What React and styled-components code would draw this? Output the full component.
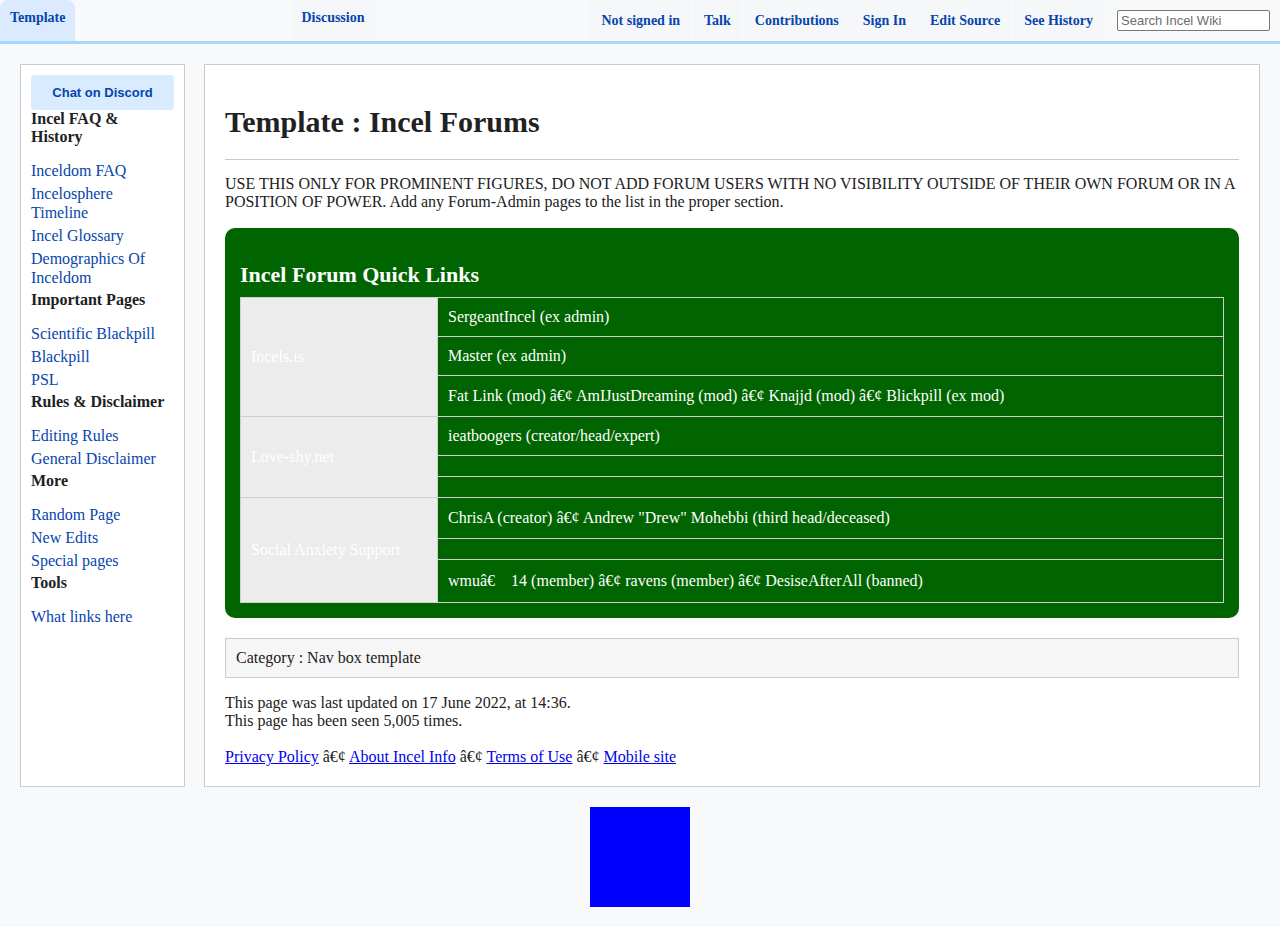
import React from "react";
import styled, { createGlobalStyle } from "styled-components";

const Global = createGlobalStyle`
  html, body { margin: 0; padding: 0; background: #f8f9fa; }
  body { font-family: "Liberation Serif", "Times New Roman", serif; color: #202122; }
  * { box-sizing: border-box; }
`;

const Header = styled.header`
  display: flex;
  justify-content: space-between;
  align-items: stretch;
  height: 44px;
  padding-right: 10px;
  border-bottom: 3px solid #a7d7f9;
  background: #f8f9fa;
`;

const Tab = styled.a`
  display: block;
  padding: 10px 10px 0;
  height: 41px;
  font: bold 14px/16px "Liberation Serif", serif;
  color: #0645ad;
  text-decoration: none;
  border-radius: 8px 8px 0 0;
  background: ${(p) => (p.$active ? "#dbeafe" : "#f6f7f9")};
`;

const NavGroup = styled.nav`
  display: flex;
  align-items: stretch;
  gap: 2px;
`;

const NavItem = styled.a`
  display: flex;
  align-items: center;
  padding: 0 11px;
  height: 41px;
  font: bold 14px/16px "Liberation Serif", serif;
  color: #0645ad;
  text-decoration: none;
  background: #f6f7f9;
`;

const Search = styled.input`
  align-self: flex-start;
  margin: 10px 0 0 11px;
  width: 153px;
  height: 21px;
  padding: 1px 3px;
  font: 13px "Liberation Sans", Arial, sans-serif;
  color: #202122;
  border: 1px solid #767676;
  border-radius: 2px;
  background: #fff;
  &::placeholder { color: #6d6d6d; }
`;

const Layout = styled.div`
  display: grid;
  grid-template-columns: 165px 1fr;
  gap: 19px;
  padding: 20px 20px 0;
`;

const Sidebar = styled.aside`
  background: #fff;
  border: 1px solid #c8ccd1;
  padding: 10px;
`;

const SideList = styled.div`
  padding-right: 4px;
`;

const DiscordButton = styled.a`
  display: flex;
  align-items: center;
  justify-content: center;
  height: 35px;
  border-radius: 4px;
  background: #d9ebff;
  color: #0645ad;
  font: bold 13px "Liberation Sans", Arial, sans-serif;
  text-decoration: none;
`;

const SideHeading = styled.div`
  font: bold 16px/18px "Liberation Serif", serif;
  color: #202122;
  margin-bottom: 15px;
`;

const SideLink = styled.a`
  display: block;
  font: 16px/19px "Liberation Serif", serif;
  color: #0645ad;
  text-decoration: none;
  margin-bottom: 4px;
`;

const Content = styled.main`
  background: #fff;
  border: 1px solid #c8ccd1;
  padding: 0 20px 20px;
`;

const Title = styled.h1`
  margin: 40px 0 0;
  font: bold 30px/34px "Liberation Serif", serif;
  color: #202122;
`;

const Rule = styled.hr`
  margin: 20px 0 15px;
  border: 0;
  border-top: 1px solid #c8ccd1;
`;

const Para = styled.p`
  margin: ${(p) => p.$mt || 0}px 0 ${(p) => p.$mb || 0}px;
  font: 16px/18px "Liberation Serif", serif;
  color: #202122;
`;

const NavBox = styled.section`
  background: #006400;
  border-radius: 10px;
  padding: 15px;
`;

const NavBoxTitle = styled.h3`
  margin: 19px 0 10px;
  font: bold 22px/25px "Liberation Serif", serif;
  color: #fff;
`;

const Table = styled.table`
  width: 100%;
  border-collapse: collapse;
  border: 1px solid #cfcfcf;
`;

const GroupCell = styled.th`
  width: 197px;
  background: #ececec;
  color: #fff;
  font: 16px/18px "Liberation Serif", serif;
  text-align: left;
  padding: 0 10px;
  border: 1px solid #cfcfcf;
`;

const ListCell = styled.td`
  height: ${(p) => p.$h}px;
  padding: 0 10px;
  color: #fff;
  font: 16px/18px "Liberation Serif", serif;
  border: 1px solid #cfcfcf;
`;

const Category = styled.div`
  margin-top: 20px;
  padding: 10px;
  background: #f6f6f6;
  border: 1px solid #c8ccd1;
  font: 16px/18px "Liberation Serif", serif;
  color: #202122;
`;

const FooterLink = styled.a`
  color: #0000ee;
  text-decoration: underline;
`;

const BadgeWrap = styled.div`
  display: flex;
  justify-content: center;
  padding: 20px 0;
`;

const Badge = styled.div`
  width: 100px;
  height: 100px;
  background: #0000ff;
`;

const B = "\u00e2\u20ac\u00a2";

const sidebar = [
  ["Incel FAQ & History", ["Inceldom FAQ", "Incelosphere Timeline", "Incel Glossary", "Demographics Of Inceldom"]],
  ["Important Pages", ["Scientific Blackpill", "Blackpill", "PSL"]],
  ["Rules & Disclaimer", ["Editing Rules", "General Disclaimer"]],
  ["More", ["Random Page", "New Edits", "Special pages"]],
  ["Tools", ["What links here"]],
];

const groups = [
  {
    name: "Incels.is",
    rows: [
      ["SergeantIncel (ex admin)", 39],
      ["Master (ex admin)", 39],
      [`Fat Link (mod) ${B} AmIJustDreaming (mod) ${B} Knajjd (mod) ${B} Blickpill (ex mod)`, 41],
    ],
  },
  {
    name: "Love-shy.net",
    rows: [
      ["ieatboogers (creator/head/expert)", 39],
      ["", 21],
      ["", 21],
    ],
  },
  {
    name: "Social Anxiety Support",
    rows: [
      [`ChrisA (creator) ${B} Andrew "Drew" Mohebbi (third head/deceased)`, 41],
      ["", 21],
      [`wmu\u00e2\u20ac\u00a0\u00a0\u00a0 14 (member) ${B} ravens (member) ${B} DesiseAfterAll (banned)`, 43],
    ],
  },
];

export default function App() {
  return (
    <>
      <Global />
      <Header>
        <Tab $active href="#">Template</Tab>
        <Tab href="#">Discussion</Tab>
        <NavGroup>
          <NavItem href="#">Not signed in</NavItem>
          <NavItem href="#">Talk</NavItem>
          <NavItem href="#">Contributions</NavItem>
          <NavItem href="#">Sign In</NavItem>
          <NavItem href="#">Edit Source</NavItem>
          <NavItem href="#">See History</NavItem>
          <Search placeholder="Search Incel Wiki" />
        </NavGroup>
      </Header>
      <Layout>
        <Sidebar>
          <DiscordButton href="#">Chat on Discord</DiscordButton>
          <SideList>
            {sidebar.map(([h, links]) => (
              <React.Fragment key={h}>
                <SideHeading>{h}</SideHeading>
                {links.map((l) => (
                  <SideLink key={l} href="#">{l}</SideLink>
                ))}
              </React.Fragment>
            ))}
          </SideList>
        </Sidebar>
        <Content>
          <Title>Template : Incel Forums</Title>
          <Rule />
          <Para $mb={17}>
            USE THIS ONLY FOR PROMINENT FIGURES, DO NOT ADD FORUM USERS WITH NO VISIBILITY OUTSIDE OF THEIR OWN FORUM OR IN A
            POSITION OF POWER. Add any Forum-Admin pages to the list in the proper section.
          </Para>
          <NavBox>
            <NavBoxTitle>Incel Forum Quick Links</NavBoxTitle>
            <Table>
              <tbody>
                {groups.map((g) =>
                  g.rows.map(([text, h], i) => (
                    <tr key={g.name + i}>
                      {i === 0 && <GroupCell rowSpan={g.rows.length}>{g.name}</GroupCell>}
                      <ListCell $h={h}>{text}</ListCell>
                    </tr>
                  ))
                )}
              </tbody>
            </Table>
          </NavBox>
          <Category>Category : Nav box template</Category>
          <Para $mt={16} $mb={18}>
            This page was last updated on 17 June 2022, at 14:36.
            <br />
            This page has been seen 5,005 times.
          </Para>
          <Para>
            <FooterLink href="#">Privacy Policy</FooterLink> {B} <FooterLink href="#">About Incel Info</FooterLink> {B}{" "}
            <FooterLink href="#">Terms of Use</FooterLink> {B} <FooterLink href="#">Mobile site</FooterLink>
          </Para>
        </Content>
      </Layout>
      <BadgeWrap>
        <Badge />
      </BadgeWrap>
    </>
  );
}
